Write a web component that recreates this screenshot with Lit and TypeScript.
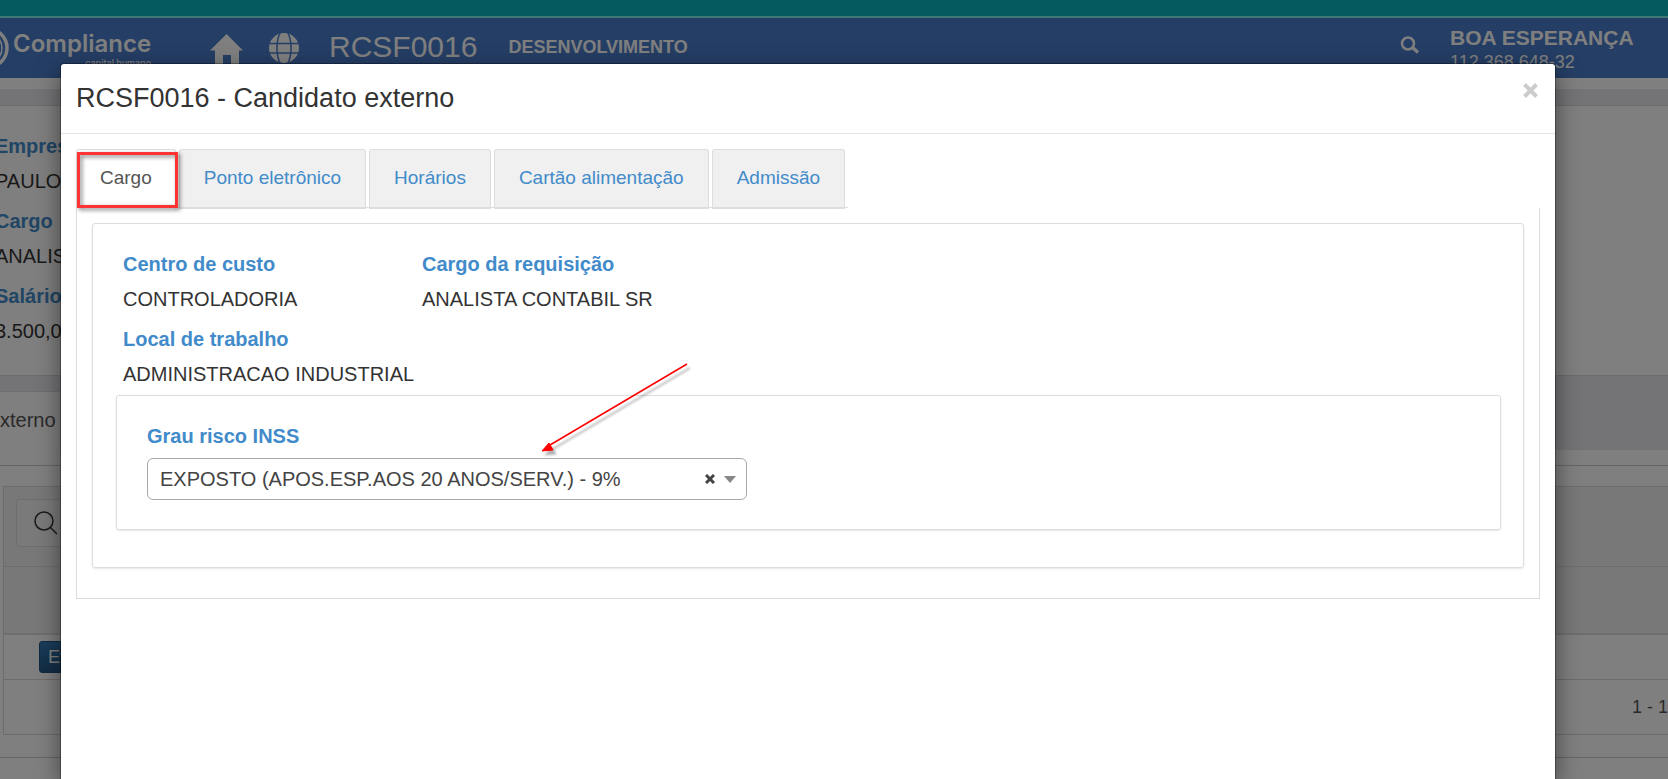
import { LitElement, html, css } from "lit";
import { customElement, property, state } from "lit/decorators.js";

/** A blue caption over its value. */
@customElement("info-field")
class InfoField extends LitElement {
  @property() label = "";
  @property() value = "";

  static styles = css`
    :host {
      display: block;
      margin-bottom: 5px;
    }
    dl,
    dd {
      margin: 0;
    }
    dt,
    dd {
      line-height: 35px;
      white-space: nowrap;
    }
    dt {
      color: #428bca;
      font-weight: bold;
    }
    dd {
      color: #333;
    }
  `;

  render() {
    return html`<dl>
      <dt>${this.label}</dt>
      <dd>${this.value}</dd>
    </dl>`;
  }
}

/** The page that lies behind the dialog. */
@customElement("background-page")
class BackgroundPage extends LitElement {
  static styles = css`
    :host {
      display: block;
      background: #fff;
      white-space: nowrap;
    }
    .strip {
      height: 16px;
      background: #08b4be;
      border-bottom: 2px solid #80f0f0;
    }
    .bar {
      display: flex;
      align-items: flex-start;
      height: 60px;
      box-sizing: border-box;
      background: #4a7cca;
      color: #fff;
    }
    .logo {
      display: flex;
      width: 150px;
      padding-top: 8px;
    }
    .rings {
      width: 13px;
      height: 44px;
      flex: none;
    }
    .brand {
      padding-top: 4px;
      font: 600 24px/28px Inter, sans-serif;
    }
    .tagline {
      font: 500 9px/10px Inter, sans-serif;
      text-align: right;
    }
    .icon {
      display: block;
      fill: currentColor;
    }
    .home {
      margin: 14px 0 0 60px;
    }
    .globe {
      margin: 14px 0 0 26px;
    }
    .code {
      margin-left: 30px;
      font-size: 30px;
      line-height: 58px;
    }
    .env {
      margin-left: 31px;
      font-size: 18px;
      font-weight: bold;
      line-height: 58px;
    }
    .search {
      margin: 18px 30px 0 auto;
    }
    .user {
      width: 218px;
    }
    .name {
      padding-top: 7px;
      font-size: 21px;
      font-weight: bold;
      line-height: 26px;
    }
    .doc {
      font-size: 18px;
      line-height: 22px;
    }
    .wall {
      background: #e8e9ee;
      margin-top: 11px;
      padding-top: 16px;
    }
    .card {
      background: #fff;
      border: 1px solid #d8d8d8;
      border-width: 1px 0;
      height: 246px;
      padding-top: 23px;
      overflow: hidden;
    }
    .card info-field {
      margin-left: -5px;
    }
    .tabs {
      display: flex;
      padding-top: 15px;
      height: 59px;
    }
    .tab {
      width: 60px;
      height: 59px;
      box-sizing: border-box;
      padding-top: 13px;
      background: #fff;
      border-top: 1px solid #ddd;
      color: #555;
      line-height: 30px;
    }
    .rule {
      height: 15px;
      border-bottom: 1px solid #ccc;
    }
    .grid {
      margin: 20px 0 0 3px;
      border: 1px solid #d8d8d8;
      border-right: 0;
    }
    .tools {
      height: 80px;
      box-sizing: border-box;
      padding: 12px;
      background: #f0f0f0;
      border-bottom: 1px solid #ddd;
    }
    .find {
      display: flex;
      align-items: center;
      width: 300px;
      height: 48px;
      box-sizing: border-box;
      padding: 0 17px;
      border: 1px solid #ddd;
      border-radius: 3px;
      background: #f4f4f4;
      color: #333;
    }
    .head {
      height: 66px;
      background: #f0f0f0;
      border-bottom: 2px solid #ddd;
    }
    .row {
      display: flex;
      height: 44px;
      padding-left: 35px;
      border-bottom: 1px solid #d8d8d8;
      align-items: center;
    }
    .action {
      height: 32px;
      padding: 0 8px;
      border: 1px solid #245580;
      border-radius: 3px;
      background: linear-gradient(#337ab7, #265a88);
      color: #fff;
      font: 18px/26px "Liberation Sans", Arial, sans-serif;
    }
    .foot {
      display: flex;
      justify-content: flex-end;
      height: 54px;
      border-bottom: 0;
      color: #555;
      font-size: 18px;
      line-height: 54px;
    }
    .end {
      margin-top: 22px;
      border-top: 1px solid #ccc;
    }
  `;

  render() {
    return html`
      <div class="strip"></div>
      <header class="bar">
        <div class="logo">
          <svg class="rings" viewBox="0 0 13 44" fill="none" stroke="#fff">
            <circle cx="-12" cy="22" r="19" stroke-width="3.500" />
            <circle cx="-13" cy="22" r="15" stroke-width="1.500" />
          </svg>
          <div>
            <div class="brand">Compliance</div>
            <div class="tagline">capital humano</div>
          </div>
        </div>
        <svg class="icon home" width="33" height="33" viewBox="0 0 33 33">
          <path d="M16.500 2 33 18.500H29V33H21V23H13V33H5V18.500H0Z" />
        </svg>
        <svg class="icon globe" width="30" height="31" viewBox="0 0 30 31">
          <circle cx="15" cy="16" r="15" />
          <g fill="none" stroke="#4a7cca" stroke-width="1.500">
            <path d="M0 11.500H30M0 21H30" />
            <path d="M11 1C7 9 7 23 11 31M19 1C23 9 23 23 19 31" />
          </g>
        </svg>
        <div class="code">RCSF0016</div>
        <div class="env">DESENVOLVIMENTO</div>
        <svg class="search" width="20" height="18" viewBox="0 0 20 18" fill="none" stroke="#fff">
          <circle cx="8" cy="7.500" r="6" stroke-width="2.500" />
          <path d="M12.500 11.500 18 16.500" stroke-width="3.500" />
        </svg>
        <div class="user">
          <div class="name">BOA ESPERANÇA</div>
          <div class="doc">112.368.648-32</div>
        </div>
      </header>
      <div class="wall">
        <div class="card">
          <info-field label="Empresa" value="PAULO"></info-field>
          <info-field label="Cargo" value="ANALISTA"></info-field>
          <info-field label="Salário" value="3.500,00"></info-field>
        </div>
        <div class="tabs"><div class="tab">xterno</div></div>
      </div>
      <div class="rule"></div>
      <div class="grid">
        <div class="tools">
          <div class="find">
            <svg width="24" height="24" viewBox="0 0 24 24" fill="none" stroke="currentColor" stroke-width="1.500">
              <circle cx="10" cy="10" r="9" />
              <path d="M16.500 16.500 23 23" />
            </svg>
          </div>
        </div>
        <div class="head"></div>
        <div class="row"><button class="action">Efetivar</button></div>
        <div class="row foot">1 - 1</div>
      </div>
      <div class="end"></div>
    `;
  }
}

@customElement("app-root")
class AppRoot extends LitElement {
  @state() private active = 0;
  private tabs = ["Cargo", "Ponto eletrônico", "Horários", "Cartão alimentação", "Admissão"];

  static styles = css`
    :host {
      display: block;
      position: relative;
      height: 100vh;
      overflow: hidden;
      font-family: "Liberation Sans", Arial, sans-serif;
      font-size: 20px;
    }
    .overlay {
      position: absolute;
      inset: 0;
      display: flex;
      background: rgba(0, 0, 0, 0.5);
      padding: 64px 113px 0 61px;
    }
    .dialog {
      position: relative;
      flex: 1;
      min-width: 0;
      background: #fff;
      border-radius: 3px 3px 0 0;
      box-shadow: 0 0 0 1px rgba(0, 0, 0, 0.3), 0 8px 24px rgba(0, 0, 0, 0.5);
    }
    .header {
      display: flex;
      justify-content: space-between;
      align-items: flex-start;
      height: 69px;
      padding: 0 16px 0 15px;
      border-bottom: 1px solid #e5e5e5;
    }
    h1 {
      margin: 0;
      color: #333;
      font-size: 27px;
      font-weight: normal;
      line-height: 68px;
    }
    button {
      font: inherit;
      cursor: pointer;
    }
    .close {
      margin-top: 18px;
      padding: 0;
      border: 0;
      background: none;
      color: #ccc;
      line-height: 0;
    }
    .body {
      padding: 15px;
    }
    .tabs {
      display: inline-flex;
      gap: 3px;
      padding-right: 3px;
      border-bottom: 1px solid #ddd;
    }
    .tab {
      height: 60px;
      margin-bottom: -2px;
      padding: 0 24px 2px;
      border: 1px solid #ddd;
      border-bottom-width: 2px;
      border-radius: 3px 3px 0 0;
      background: #f0f0f0;
      color: #428bca;
      font-size: 19px;
      white-space: nowrap;
    }
    .tab.active {
      padding: 0 23px 2px;
      background: #fff;
      border-bottom-color: #fff;
      color: #555;
    }
    .tabrow {
      position: relative;
      display: flex;
    }
    .mark {
      position: absolute;
      left: 1px;
      top: 3px;
      width: 101px;
      height: 56px;
      box-sizing: border-box;
      border: 3px solid #ff3333;
      filter: drop-shadow(2px 2px 2px rgba(0, 0, 0, 0.5));
      pointer-events: none;
    }
    .pane {
      padding: 15px 15px 30px;
      border: 1px solid #ddd;
      border-top: 0;
    }
    .box {
      border: 1px solid #ddd;
      border-radius: 3px;
      box-shadow: 0 1px 2px rgba(0, 0, 0, 0.1);
    }
    .outer {
      padding: 23px 22px 37px 23px;
    }
    .fields {
      display: grid;
      grid-template-columns: 299px 1fr;
      padding: 0 7px;
    }
    .risk {
      position: relative;
      margin-top: -2px;
      padding: 23px 30px 29px;
    }
    label {
      display: block;
      margin-bottom: 4px;
      color: #428bca;
      font-weight: bold;
      line-height: 35px;
    }
    .combo {
      position: relative;
      width: 600px;
      max-width: 100%;
    }
    select {
      display: block;
      width: 100%;
      height: 42px;
      padding: 0 70px 0 12px;
      appearance: none;
      border: 1px solid #aaa;
      border-radius: 6px;
      background: #fff;
      color: #444;
      font: inherit;
    }
    .marks {
      position: absolute;
      top: 0;
      right: 11px;
      height: 42px;
      display: flex;
      align-items: center;
      gap: 9px;
    }
    .clear {
      padding: 0;
      border: 0;
      background: none;
      color: #444;
      line-height: 0;
    }
    .caret {
      border: 6px solid transparent;
      border-top: 7px solid #888;
      border-bottom: 0;
    }
    .arrow {
      position: absolute;
      left: 421px;
      top: -37px;
      filter: drop-shadow(3px 4px 1px rgba(0, 0, 0, 0.3));
      pointer-events: none;
    }
  `;

  render() {
    return html`
      <background-page></background-page>
      <div class="overlay">
        <section class="dialog" role="dialog" aria-labelledby="title">
          <div class="header">
            <h1 id="title">RCSF0016 - Candidato externo</h1>
            <button class="close" aria-label="Fechar">
              <svg width="17" height="17" viewBox="0 0 17 17" stroke="currentColor" stroke-width="4">
                <path d="M2.500 2.500 14.500 14.500M14.500 2.500 2.500 14.500" />
              </svg>
            </button>
          </div>
          <div class="body">
            <div class="tabrow">
              <div class="tabs" role="tablist">
                ${this.tabs.map(
                  (name, i) => html`<button
                    class="tab ${i === this.active ? "active" : ""}"
                    role="tab"
                    aria-selected=${i === this.active}
                    @click=${() => (this.active = i)}
                  >
                    ${name}
                  </button>`
                )}
              </div>
              <div class="mark"></div>
            </div>
            <div class="pane" role="tabpanel">
              <div class="box outer">
                <div class="fields">
                  <info-field label="Centro de custo" value="CONTROLADORIA"></info-field>
                  <info-field label="Cargo da requisição" value="ANALISTA CONTABIL SR"></info-field>
                  <info-field label="Local de trabalho" value="ADMINISTRACAO INDUSTRIAL"></info-field>
                </div>
                <div class="box risk">
                  <label for="risk">Grau risco INSS</label>
                  <div class="combo">
                    <select id="risk">
                      <option>EXPOSTO (APOS.ESP.AOS 20 ANOS/SERV.) - 9%</option>
                    </select>
                    <div class="marks">
                      <button class="clear" aria-label="Limpar">
                        <svg width="10" height="10" viewBox="0 0 10 10" stroke="currentColor" stroke-width="3">
                          <path d="M1 1 9 9M9 1 1 9" />
                        </svg>
                      </button>
                      <span class="caret"></span>
                    </div>
                  </div>
                  <svg class="arrow" width="156" height="96" viewBox="0 0 156 96">
                    <path d="M149 5 12 86" stroke="#f00" stroke-width="1.500" />
                    <path d="M4 92 11 84 15 91Z" fill="#f00" stroke="#f00" />
                  </svg>
                </div>
              </div>
            </div>
          </div>
        </section>
      </div>
    `;
  }
}
